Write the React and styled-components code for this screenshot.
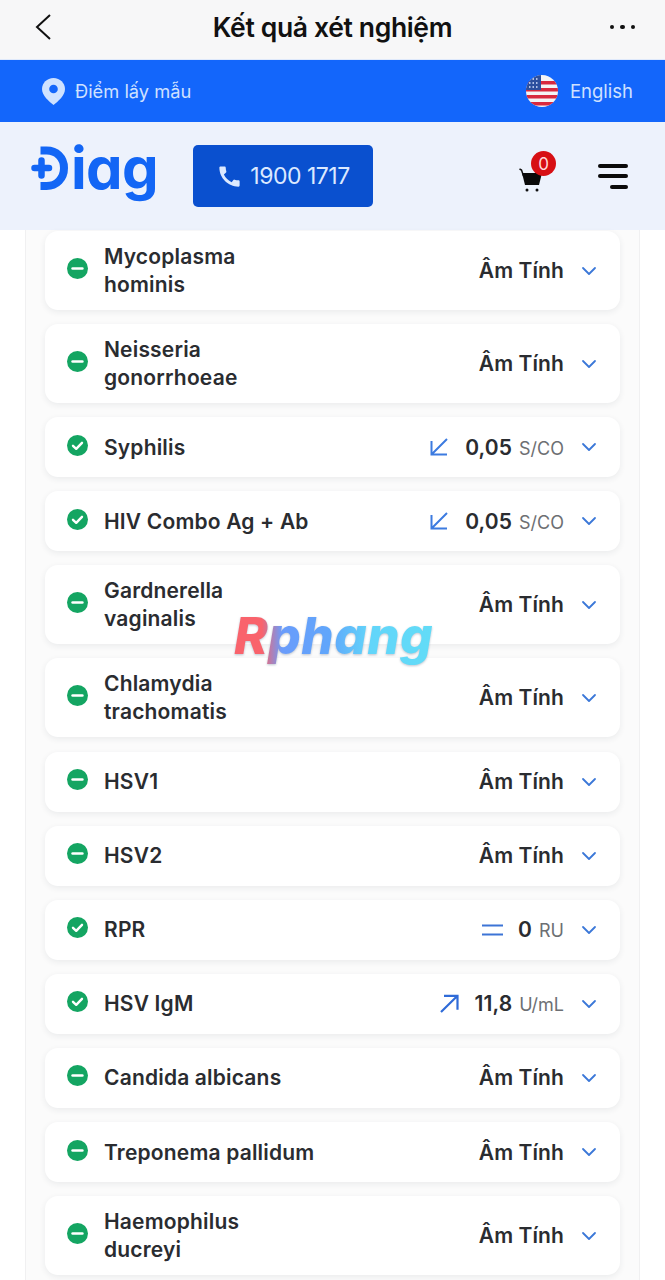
import { ChevronDown } from 'lucide-react'
import { MdCall } from 'react-icons/md'
import styled, { createGlobalStyle } from 'styled-components'

const GlobalStyle = createGlobalStyle`
  html, body {
    margin: 0;
    padding: 0;
    background: #ffffff;
  }
  body {
    font-family: 'Inter', 'Liberation Sans', sans-serif;
    -webkit-font-smoothing: antialiased;
  }
`

const Page = styled.div`
  position: relative;
  width: 665px;
  height: 1280px;
  overflow: hidden;
  background: #ffffff;
`

const TopBar = styled.div`
  display: grid;
  grid-template-columns: 1fr auto 1fr;
  align-items: center;
  box-sizing: content-box;
  height: 54px;
  padding: 0 30px 5px;
  background: #f7f7f8;
  border-bottom: 1px solid #dfe9fb;
`

const BackButton = styled.div`
  display: flex;
  margin-left: 5px;
`

const Title = styled.div`
  font-size: 26.5px;
  font-weight: 600;
  letter-spacing: -0.35px;
  color: #111111;
`

const Dots = styled.div`
  display: flex;
  justify-content: flex-end;
  gap: 6px;
`

const Dot = styled.span`
  width: 4.5px;
  height: 4.5px;
  border-radius: 50%;
  background: #111111;
`

const LocationBar = styled.div`
  display: flex;
  align-items: center;
  justify-content: space-between;
  height: 62px;
  padding: 0 32px 0 42px;
  background: #1366fb;
`

const BarGroup = styled.div`
  display: flex;
  align-items: center;
  gap: ${(p) => p.$gap}px;
`

const BarText = styled.span`
  font-size: ${(p) => p.$size}px;
  color: #cfe1ff;
`

const Header = styled.div`
  display: flex;
  align-items: center;
  height: 108px;
  padding: 0 37px 0 31px;
  background: #edf2fc;
`

const Logo = styled.div`
  display: flex;
  align-items: flex-start;
  width: 162px;
  height: 60px;
  color: #1366f5;
`

const LogoText = styled.span`
  margin: -13px 0 0 0;
  font-size: 58px;
  font-weight: 700;
  line-height: 70px;
  letter-spacing: -0.6px;
  font-feature-settings: 'cv11' 1;
`

const CallButton = styled.div`
  display: flex;
  align-items: center;
  justify-content: center;
  gap: 7px;
  width: 180px;
  height: 62px;
  border-radius: 5px;
  background: #0a50cf;
  color: #dce9ff;
  font-size: 23px;
  letter-spacing: -0.5px;
`

const HeaderActions = styled.div`
  display: flex;
  align-items: center;
  gap: 54px;
  margin-left: auto;
`

const Cart = styled.div`
  position: relative;
  display: flex;
  width: 25px;
  height: 24px;
  margin-top: 8px;
`

const CartBadge = styled.span`
  position: absolute;
  top: -17px;
  left: 12px;
  display: flex;
  align-items: center;
  justify-content: center;
  width: 25px;
  height: 25px;
  border-radius: 50%;
  background: #d70f14;
  color: #ffd9d9;
  font-size: 17px;
`

const Burger = styled.div`
  display: flex;
  flex-direction: column;
  align-items: flex-end;
  gap: 6.5px;
`

const BurgerLine = styled.span`
  width: ${(p) => p.$width}px;
  height: 4px;
  border-radius: 2px;
  background: #0a0a0a;
`

const Panel = styled.div`
  height: 1050px;
  margin: 0 25px;
  padding: 1px 19px 0;
  background: #fbfbfb;
  border-left: 1px solid #f0f0f1;
  border-right: 1px solid #f0f0f1;
  display: flex;
  flex-direction: column;
  gap: 14.1px;
`

const Card = styled.div`
  display: flex;
  flex: none;
  align-items: center;
  height: ${(p) => (p.$tall ? 79 : 60)}px;
  padding: 0 19px 0 22px;
  border-radius: 13px;
  background: #ffffff;
  box-shadow: 0 2px 6px rgba(40, 50, 70, 0.08);
`

const Status = styled.span`
  display: flex;
  flex: none;
  margin-top: -4px;
`

const Name = styled.div`
  margin: ${(p) => (p.$tall ? 0 : 1)}px 0 0 16px;
  font-size: 21px;
  font-weight: 600;
  letter-spacing: 0.18px;
  line-height: 28px;
  white-space: pre-line;
  color: #2a2c30;
`

const Result = styled.div`
  display: flex;
  align-items: baseline;
  margin-left: auto;
`

const Trend = styled.span`
  display: flex;
  align-self: center;
  margin-right: ${(p) => p.$gap}px;
`

const ResultValue = styled.span`
  font-size: 21px;
  font-weight: 600;
  letter-spacing: 0.1px;
  color: #2a2c30;
`

const ResultUnit = styled.span`
  margin-left: 7px;
  font-size: 18px;
  color: #6d6f73;
`

const Chevron = styled.span`
  display: flex;
  flex: none;
  margin-left: 13px;
  color: #3b78d8;
`

const Watermark = styled.div`
  position: absolute;
  top: 605px;
  left: 234px;
  font-family: 'Inter', sans-serif;
  font-size: 51px;
  font-style: italic;
  font-weight: 800;
  line-height: 62px;
  letter-spacing: 0.5px;
  background: linear-gradient(90deg, #f9636c 0%, #f9636c 14%, #6a9cfb 24%, #60a6fb 48%, #62d5fa 68%, #62dcf7 100%);
  -webkit-background-clip: text;
  background-clip: text;
  color: transparent;
  filter: drop-shadow(0 1px 1px rgba(70, 90, 120, 0.35));
`

function StatusIcon({ ok }) {
  return (
    <Status>
      <svg width="21" height="21" viewBox="0 0 21 21">
        <circle cx="10.5" cy="10.5" r="10.5" fill="#14a562" />
        {ok ? (
          <path d="M6 10.8l3.2 3L15 7.8" fill="none" stroke="#fff" strokeWidth="2.4" strokeLinecap="round" strokeLinejoin="round" />
        ) : (
          <path d="M5.6 10.5h9.8" stroke="#fff" strokeWidth="2.6" strokeLinecap="round" />
        )}
      </svg>
    </Status>
  )
}

function TrendIcon({ kind }) {
  if (kind === 'equal') {
    return (
      <Trend $gap={15}>
        <svg width="21" height="12" viewBox="0 0 21 12" fill="none" stroke="#3c74d6" strokeWidth="2">
          <path d="M0 1.5h21M0 10.5h21" />
        </svg>
      </Trend>
    )
  }
  if (kind === 'up') {
    return (
      <Trend $gap={15}>
        <svg width="19" height="19" viewBox="0 0 19 19" fill="none" stroke="#2f6bd8" strokeWidth="2.2">
          <path d="M1 18L17.5 1.8M4 1.8h13.5v14" />
        </svg>
      </Trend>
    )
  }
  return (
    <Trend $gap={17}>
      <svg width="18" height="18" viewBox="0 0 18 18" fill="none" stroke="#3c7be0" strokeWidth="2">
        <path d="M17 1L2 16M1.500 3v13.500H17" />
      </svg>
    </Trend>
  )
}

function PinIcon() {
  return (
    <svg width="23" height="27" viewBox="0 0 23 27">
      <path d="M11.500 0C5 0 0 5 0 11c0 6.500 7 12.500 11.500 16C16 23.500 23 17.500 23 11 23 5 18 0 11.500 0z" fill="#cfe2ff" />
      <circle cx="11.500" cy="11" r="4.300" fill="#1366fb" />
    </svg>
  )
}

function FlagIcon() {
  const stripes = [6, 13, 20, 27]
  return (
    <svg width="32" height="32" viewBox="0 0 32 32">
      <defs>
        <clipPath id="flag-clip">
          <circle cx="16" cy="16" r="16" />
        </clipPath>
      </defs>
      <g clipPath="url(#flag-clip)">
        <rect width="32" height="32" fill="#f4f4f6" />
        {stripes.map((y) => (
          <rect key={y} y={y} width="32" height="3.500" fill="#d8293f" />
        ))}
        <rect width="15" height="15" fill="#2c4f9e" />
        <path d="M3 4h9M3 8h9M3 12h9" stroke="#dbe6ff" strokeWidth="1.500" strokeDasharray="1.500 2" />
      </g>
    </svg>
  )
}

function LogoMark() {
  return (
    <svg width="40" height="44" viewBox="0 0 40 44" fill="none">
      <path d="M9.500 4.500h6c10 0 17.500 7 17.500 17.500s-7.500 18-17.500 18h-6" stroke="#1366f5" strokeWidth="8" />
      <path d="M3.500 22h17M11.500 14v16" stroke="#edf2fc" strokeWidth="11" />
      <path d="M3.500 22h14.500M10.500 14.500v15" stroke="#1366f5" strokeWidth="6.500" strokeLinecap="round" />
    </svg>
  )
}

function BackIcon() {
  return (
    <svg width="16" height="26" viewBox="0 0 16 26" fill="none" stroke="#111" strokeWidth="2">
      <path d="M15 1L2 13l13 12" />
    </svg>
  )
}

function CartIcon() {
  return (
    <svg width="25" height="24" viewBox="0 0 25 24">
      <path d="M0.500 1l2 1 2 6" fill="none" stroke="#111" strokeWidth="1.500" />
      <path d="M3 5h20l-3 12H6z" fill="#0a0a0a" />
      <circle cx="8" cy="22" r="1.500" fill="#111" />
      <circle cx="18" cy="22" r="1.500" fill="#111" />
    </svg>
  )
}

const results = [
  { name: 'Mycoplasma\nhominis', ok: false, tall: true, value: 'Âm Tính' },
  { name: 'Neisseria\ngonorrhoeae', ok: false, tall: true, value: 'Âm Tính' },
  { name: 'Syphilis', ok: true, value: '0,05', unit: 'S/CO', trend: 'down' },
  { name: 'HIV Combo Ag + Ab', ok: true, value: '0,05', unit: 'S/CO', trend: 'down' },
  { name: 'Gardnerella\nvaginalis', ok: false, tall: true, value: 'Âm Tính' },
  { name: 'Chlamydia\ntrachomatis', ok: false, tall: true, value: 'Âm Tính' },
  { name: 'HSV1', ok: false, value: 'Âm Tính' },
  { name: 'HSV2', ok: false, value: 'Âm Tính' },
  { name: 'RPR', ok: true, value: '0', unit: 'RU', trend: 'equal' },
  { name: 'HSV IgM', ok: true, value: '11,8', unit: 'U/mL', trend: 'up' },
  { name: 'Candida albicans', ok: false, value: 'Âm Tính' },
  { name: 'Treponema pallidum', ok: false, value: 'Âm Tính' },
  { name: 'Haemophilus\nducreyi', ok: false, tall: true, value: 'Âm Tính' },
]

export default function App() {
  return (
    <Page>
      <GlobalStyle />
      <TopBar>
        <BackButton>
          <BackIcon />
        </BackButton>
        <Title>Kết quả xét nghiệm</Title>
        <Dots>
          <Dot />
          <Dot />
          <Dot />
        </Dots>
      </TopBar>
      <LocationBar>
        <BarGroup $gap={10}>
          <PinIcon />
          <BarText $size={18.3}>Điểm lấy mẫu</BarText>
        </BarGroup>
        <BarGroup $gap={12}>
          <FlagIcon />
          <BarText $size={18.5}>English</BarText>
        </BarGroup>
      </LocationBar>
      <Header>
        <Logo>
          <LogoMark />
          <LogoText>iag</LogoText>
        </Logo>
        <CallButton>
          <MdCall size={27} />
          1900 1717
        </CallButton>
        <HeaderActions>
          <Cart>
            <CartIcon />
            <CartBadge>0</CartBadge>
          </Cart>
          <Burger>
            <BurgerLine $width={30} />
            <BurgerLine $width={30} />
            <BurgerLine $width={18} />
          </Burger>
        </HeaderActions>
      </Header>
      <Panel>
        {results.map((item) => (
          <Card key={item.name} $tall={item.tall}>
            <StatusIcon ok={item.ok} />
            <Name $tall={item.tall}>{item.name}</Name>
            <Result>
              {item.trend && <TrendIcon kind={item.trend} />}
              <ResultValue>{item.value}</ResultValue>
              {item.unit && <ResultUnit>{item.unit}</ResultUnit>}
            </Result>
            <Chevron>
              <ChevronDown size={24} strokeWidth={1.8} />
            </Chevron>
          </Card>
        ))}
      </Panel>
      <Watermark>Rphang</Watermark>
    </Page>
  )
}
